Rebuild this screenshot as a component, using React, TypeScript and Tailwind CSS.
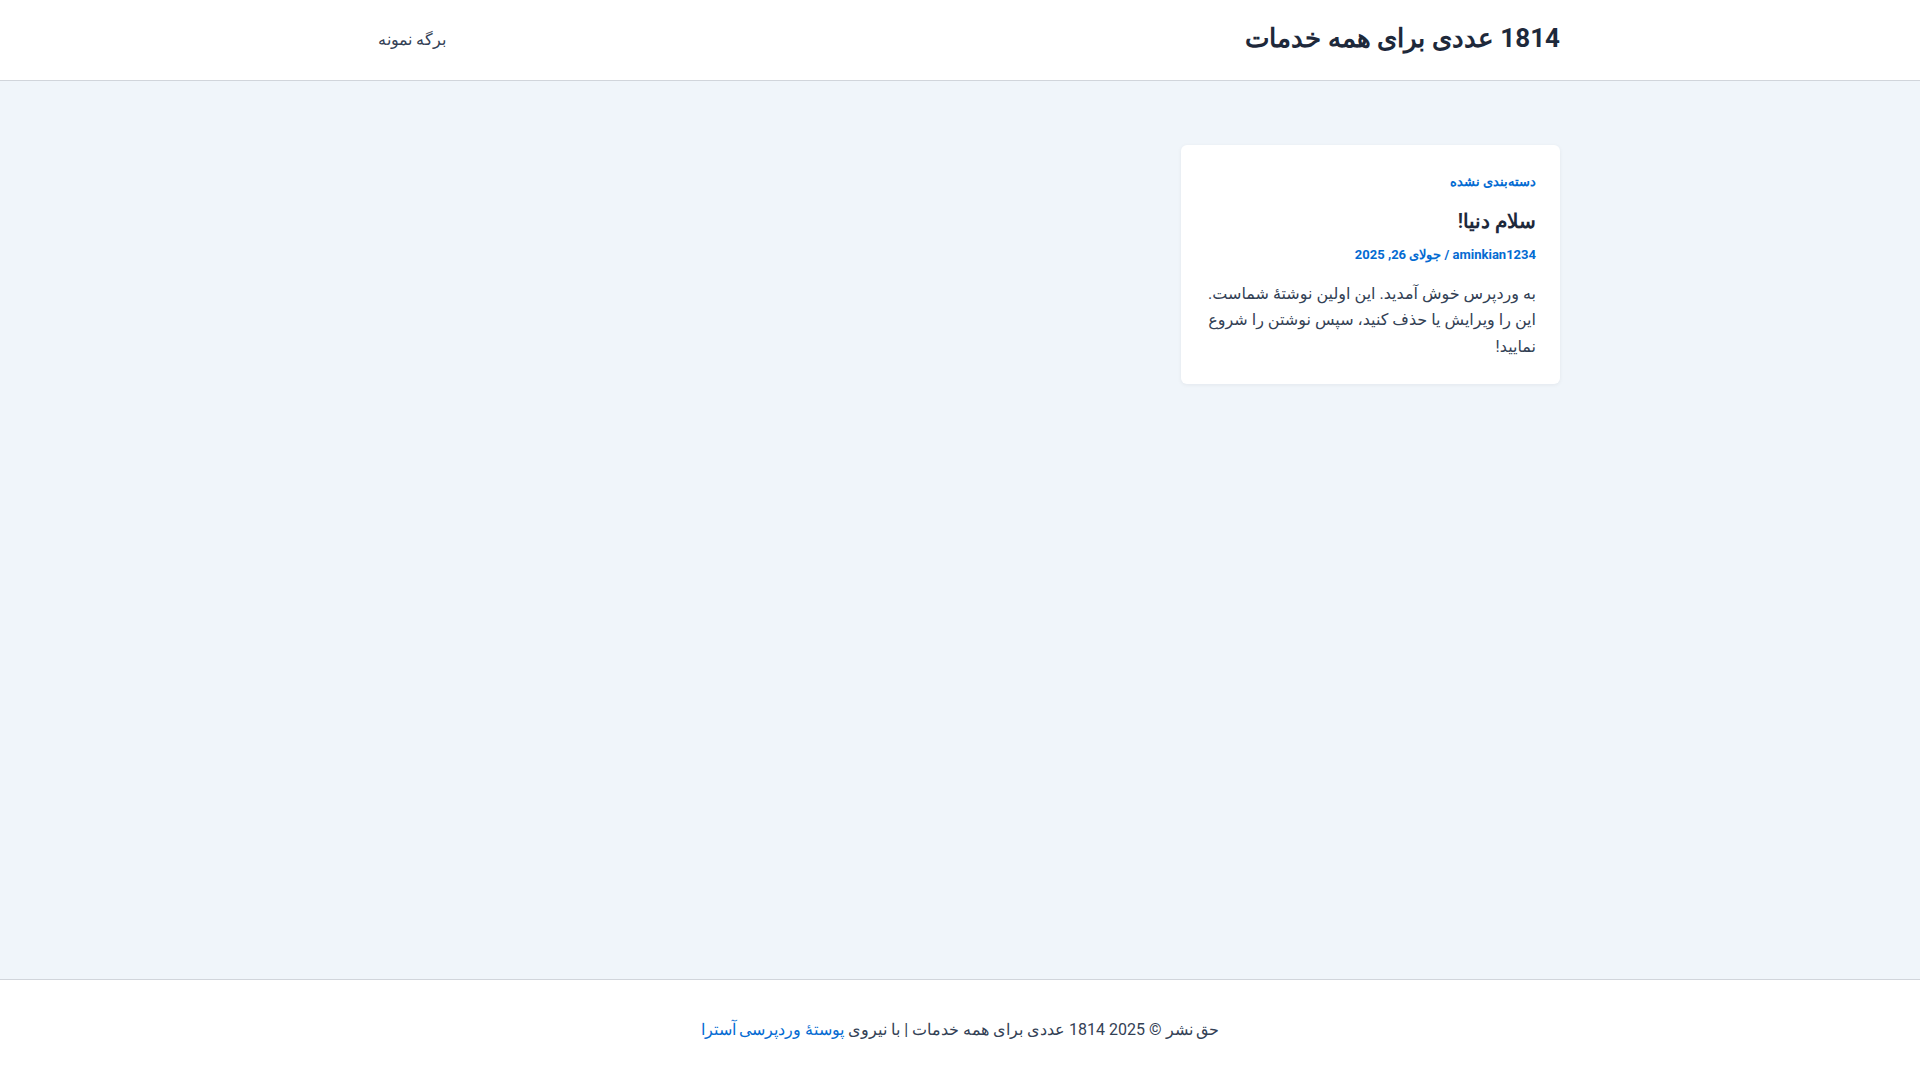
export default function App() {
  return (
    <div
      dir="rtl"
      className="min-h-screen flex flex-col bg-[#f0f5fa] text-[#334155]"
      style={{ fontFamily: "Roboto, sans-serif" }}
    >
      <header className="bg-white border-b border-[#d1d5db] h-[81px]">
        <div className="max-w-[1200px] mx-auto h-full flex items-center justify-between">
          <a href="#" className="mb-[4px] text-[26px] font-bold text-[#1e293b] leading-none">
            1814 عددی برای همه خدمات
          </a>
          <nav className="flex">
            <a href="#" className="mb-[1px] px-[18px] text-[16px] text-[#334155]">
              برگه نمونه
            </a>
          </nav>
        </div>
      </header>

      <main className="flex-1">
        <div className="max-w-[1200px] mx-auto pt-[64px] grid grid-cols-3 gap-[31px] items-start">
          <article className="bg-white rounded-md shadow-[0_1px_4px_rgba(15,23,42,0.06)] px-[24px] pt-[27px] pb-[24px]">
            <a href="#" className="block text-[13px] font-semibold text-[#046bd2] leading-[20px]">
              دسته‌بندی نشده
            </a>
            <h2 className="mt-[14px] text-[20px] font-semibold text-[#1e293b] leading-[30px]">
              سلام دنیا!
            </h2>
            <div className="mt-[9px] text-[13px] font-bold text-[#046bd2] leading-[20px]">
              <a href="#">aminkian1234</a>
              <span> / </span>
              <span>جولای 26, 2025</span>
            </div>
            <p
              className="mt-[16px] text-[16px] leading-[26.4px] text-[#334155]"
              style={{ fontFamily: "Roboto, 'DejaVu Sans', sans-serif" }}
            >
              به وردپرس خوش آمدید. این اولین نوشتهٔ شماست. این را ویرایش یا حذف کنید، سپس نوشتن را شروع نمایید!
            </p>
          </article>
        </div>
      </main>

      <footer className="bg-white border-t border-[#d1d5db] h-[101px] flex items-center justify-center">
        <p className="text-[16px] text-[#334155]">
          حق نشر © 2025 1814 عددی برای همه خدمات | با نیروی{" "}
          <a href="#" className="text-[#046bd2]">
            پوستهٔ وردپرسی آسترا
          </a>
        </p>
      </footer>
    </div>
  );
}
